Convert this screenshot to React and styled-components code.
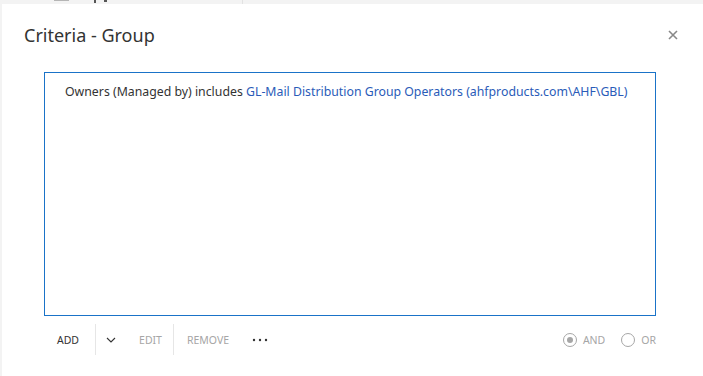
import React, { useState } from 'react';
import styled, { createGlobalStyle } from 'styled-components';

const GlobalStyle = createGlobalStyle`
  html, body {
    margin: 0;
    padding: 0;
    background: #f3f3f3;
    font-family: "Noto Sans", "Open Sans", Arial, sans-serif;
    overflow: hidden;
  }
`;

const Backdrop = styled.div`
  height: 376px;
  display: flex;
  flex-direction: column;
`;

const BackdropStrip = styled.div`
  height: 4px;
  display: flex;
  align-items: flex-start;
  padding-left: 54px;
  gap: 25px;
`;

const StripBit = styled.span`
  display: block;
  width: ${(p) => p.$w}px;
  height: ${(p) => p.$h}px;
  background: ${(p) => p.$c};
  margin-left: ${(p) => p.$ml || 0}px;
`;

const Dialog = styled.div`
  flex: 1;
  margin-left: 2px;
  background: #fff;
  display: flex;
  flex-direction: column;
`;

const Header = styled.div`
  display: flex;
  align-items: center;
  justify-content: space-between;
  padding: 19px 24px 0 22px;
  height: 24px;
`;

const Title = styled.h1`
  margin: 0;
  font-size: 18px;
  font-weight: 400;
  line-height: 24px;
  color: #333;
`;

const CloseButton = styled.button`
  border: none;
  background: none;
  padding: 0;
  width: 12px;
  height: 12px;
  display: flex;
  align-items: center;
  justify-content: center;
  cursor: pointer;
`;

const Body = styled.div`
  padding: 25px 0 0 42px;
  width: 612px;
`;

const CriteriaBox = styled.div`
  border: 1px solid #1a73c8;
  padding: 10px 20px;
  box-sizing: border-box;
  height: 244px;
  font-size: 12.3px;
  line-height: 18px;
  color: #333;
  white-space: nowrap;
`;

const Link = styled.a`
  color: #2a5bb8;
  text-decoration: none;
`;

const Toolbar = styled.div`
  display: flex;
  align-items: center;
  margin-top: 8px;
  height: 31px;
`;

const ToolButton = styled.button`
  border: none;
  background: none;
  font-family: inherit;
  font-size: 10.5px;
  color: ${(p) => (p.$disabled ? '#a6a6a6' : '#333')};
  padding: 0 ${(p) => p.$pr ?? 13}px 0 ${(p) => p.$pl ?? 13}px;
  height: 31px;
  display: flex;
  align-items: center;
  cursor: ${(p) => (p.$disabled ? 'default' : 'pointer')};
`;

const Separator = styled.span`
  width: 1px;
  height: 31px;
  background: #e6e6e6;
`;

const Spacer = styled.div`
  flex: 1;
`;

const RadioGroup = styled.div`
  display: flex;
  align-items: center;
  gap: 16px;
`;

const RadioLabel = styled.label`
  display: flex;
  align-items: center;
  gap: 6px;
  font-size: 10.5px;
  color: #a6a6a6;
  cursor: default;
`;

const RadioCircle = styled.span`
  width: 12px;
  height: 12px;
  border: 1px solid #a6a6a6;
  border-radius: 50%;
  display: flex;
  align-items: center;
  justify-content: center;
  &::after {
    content: '';
    width: 6px;
    height: 6px;
    border-radius: 50%;
    background: ${(p) => (p.$checked ? '#a6a6a6' : 'transparent')};
  }
`;

export default function App() {
  const [mode] = useState('AND');

  return (
    <Backdrop>
      <GlobalStyle />
      <BackdropStrip>
        <StripBit $w={15} $h={1} $c="#b5b5b5" />
        <StripBit $w={2} $h={3} $c="#555" />
        <StripBit $w={3} $h={2} $c="#555" $ml={-17} />
        <StripBit $w={1} $h={4} $c="#e2e2e2" $ml={110} />
      </BackdropStrip>
      <Dialog>
        <Header>
          <Title>Criteria - Group</Title>
          <CloseButton aria-label="Close">
            <svg width="10" height="10" viewBox="0 0 10 10">
              <path d="M1 1 L9 9 M9 1 L1 9" stroke="#888" strokeWidth="1.6" />
            </svg>
          </CloseButton>
        </Header>
        <Body>
          <CriteriaBox>
            Owners (Managed by) includes{' '}
            <Link href="#">GL-Mail Distribution Group Operators (ahfproducts.com\AHF\GBL)</Link>
          </CriteriaBox>
          <Toolbar>
            <ToolButton $pl={13} $pr={16}>ADD</ToolButton>
            <Separator />
            <ToolButton $pl={10} $pr={10} aria-label="More add options">
              <svg width="10" height="6" viewBox="0 0 10 6">
                <path d="M1 1 L5 5 L9 1" fill="none" stroke="#333" strokeWidth="1.1" />
              </svg>
            </ToolButton>
            <ToolButton $disabled $pl={13} $pr={11}>EDIT</ToolButton>
            <Separator />
            <ToolButton $disabled $pl={13} $pr={12}>REMOVE</ToolButton>
            <ToolButton $pl={11}>
              <svg width="16" height="4" viewBox="0 0 16 4">
                <circle cx="2" cy="2" r="1.2" fill="#333" />
                <circle cx="8" cy="2" r="1.2" fill="#333" />
                <circle cx="14" cy="2" r="1.2" fill="#333" />
              </svg>
            </ToolButton>
            <Spacer />
            <RadioGroup>
              <RadioLabel>
                <RadioCircle $checked={mode === 'AND'} />
                AND
              </RadioLabel>
              <RadioLabel>
                <RadioCircle $checked={mode === 'OR'} />
                OR
              </RadioLabel>
            </RadioGroup>
          </Toolbar>
        </Body>
      </Dialog>
    </Backdrop>
  );
}
